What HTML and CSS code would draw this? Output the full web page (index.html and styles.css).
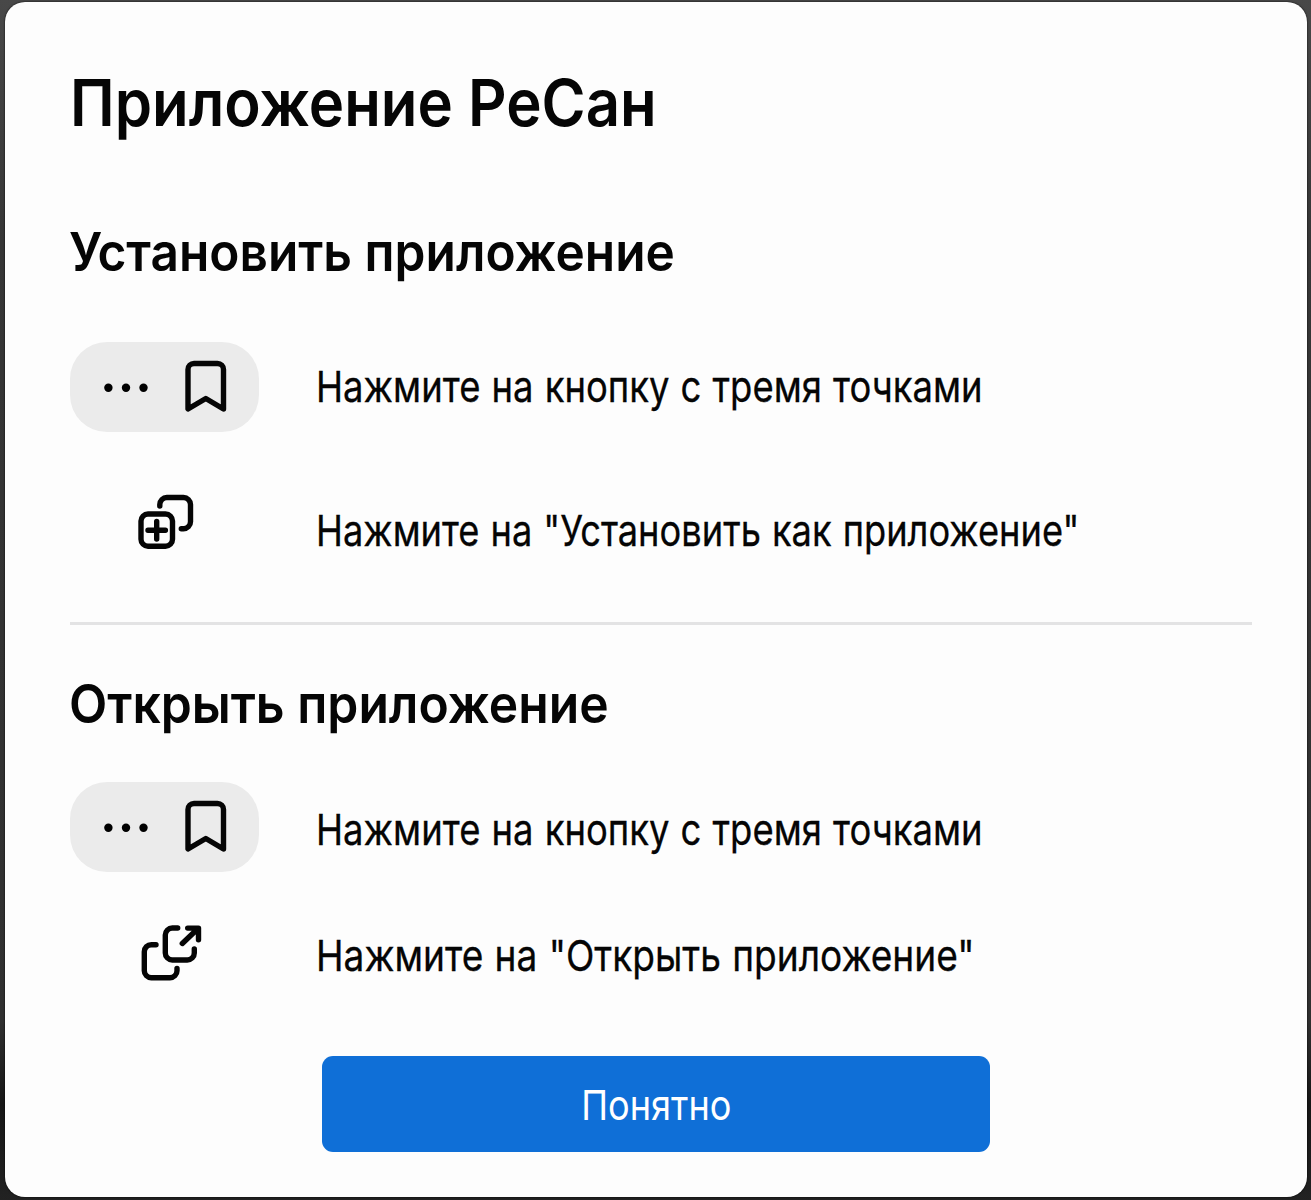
FILE: index.html
```html
<!DOCTYPE html>
<html lang="ru">
<head>
    <meta charset="UTF-8">
    <meta name="viewport" content="width=device-width, initial-scale=1.0">
    <title>Приложение РеСан</title>
    <link rel="stylesheet" href="styles.css">
</head>
<body>
    <div class="modal">
        <h1 class="modal-title">Приложение РеСан</h1>

        <h2 class="section-title install-title">Установить приложение</h2>
        <div class="step step-menu">
            <div class="step-icon">
                <svg class="pill" viewBox="0 0 189 90">
                    <circle cx="38.4" cy="45.8" r="4.2"/>
                    <circle cx="56" cy="45.8" r="4.2"/>
                    <circle cx="73.5" cy="45.8" r="4.2"/>
                    <path class="line" d="M118 67V27.5a6 6 0 0 1 6-6h23.5a6 6 0 0 1 6 6V67l-17.7-10.5z"/>
                </svg>
            </div>
            <p class="step-text text-menu">Нажмите на кнопку с тремя точками</p>
        </div>
        <div class="step step-install">
            <div class="step-icon">
                <svg class="icon" viewBox="0 0 64 58">
                    <rect class="line" x="5" y="20" width="31.5" height="32.2" rx="7"/>
                    <path class="line" d="M20.7 27.5v17.5M12 36.2h17.4"/>
                    <path class="line" d="M23.8 12v-1.5a7 7 0 0 1 7-7h16.7a7 7 0 0 1 7 7v17.2a7 7 0 0 1-7 7h-2.2"/>
                </svg>
            </div>
            <p class="step-text text-install">Нажмите на "Установить как приложение"</p>
        </div>

        <hr class="divider">

        <h2 class="section-title open-title">Открыть приложение</h2>
        <div class="step step-menu-open">
            <div class="step-icon">
                <svg class="pill" viewBox="0 0 189 90">
                    <circle cx="38.4" cy="45.8" r="4.2"/>
                    <circle cx="56" cy="45.8" r="4.2"/>
                    <circle cx="73.5" cy="45.8" r="4.2"/>
                    <path class="line" d="M118 67V27.5a6 6 0 0 1 6-6h23.5a6 6 0 0 1 6 6V67l-17.7-10.5z"/>
                </svg>
            </div>
            <p class="step-text text-menu">Нажмите на кнопку с тремя точками</p>
        </div>
        <div class="step step-open">
            <div class="step-icon">
                <svg class="icon icon-open" viewBox="0 0 64 58">
                    <path class="line" d="M16 19.7h-4.7a7 7 0 0 0-7 7v19a7 7 0 0 0 7 7H30a7 7 0 0 0 7-7v-2.2"/>
                    <path class="line" d="M37.7 3h-5.4a7 7 0 0 0-7 7v18a7 7 0 0 0 7 7h15a7 7 0 0 0 7-7v-4"/>
                    <path class="line" d="M42.3 18.5L58.3 3.3M47.7 3.1h10.8v11.7"/>
                </svg>
            </div>
            <p class="step-text text-open">Нажмите на "Открыть приложение"</p>
        </div>

        <button class="ok-button"><span class="ok-text">Понятно</span></button>
    </div>
</body>
</html>
```
FILE: styles.css
```css
* {
    box-sizing: border-box;
    margin: 0;
    padding: 0;
}
body {
    height: 1200px;
    padding: 2px 4px 2px 5px;
    overflow: hidden;
    font-family: Inter, Roboto, sans-serif;
    color: #050505;
    background: linear-gradient(#484848, #363636 20%, #303030 85%, #161616 92%, #222222);
}
.modal {
    height: 1195px;
    padding: 61px 55px 0 65px;
    border-radius: 20px;
    background: #fdfdfd;
    box-shadow: 0 0 2px #000000;
}
.modal-title,
.section-title,
.step-text {
    transform-origin: left center;
    white-space: nowrap;
}
.modal-title {
    font-size: 65px;
    font-weight: 600;
    line-height: 80px;
    transform: scaleX(0.921);
}
.section-title {
    margin-left: -1px;
    font-size: 53px;
    font-weight: 600;
    line-height: 64px;
}
.install-title {
    margin-top: 77px;
    transform: scaleX(0.936);
}
.open-title {
    margin-top: 47px;
    transform: scaleX(0.939);
}
.step {
    display: flex;
}
.step-icon {
    width: 189px;
    margin-right: 57px;
    flex-shrink: 0;
}
.step-text {
    align-self: center;
    font-size: 43px;
    line-height: 52px;
    word-spacing: 1px;
    -webkit-text-stroke: 0.3px #050505;
}
.text-menu {
    transform: scaleX(0.848);
}
.text-install {
    transform: scaleX(0.843);
}
.text-open {
    transform: scaleX(0.863);
}
.step-menu {
    height: 88px;
    margin-top: 58px;
}
.step-install {
    height: 72px;
    margin-top: 64px;
}
.step-menu-open {
    height: 93px;
    margin-top: 46px;
}
.step-open {
    height: 59px;
    margin-top: 50px;
}
.pill {
    display: block;
    width: 189px;
    height: 90px;
    border-radius: 37px;
    background: #ebebeb;
}
.icon {
    display: block;
    width: 64px;
    height: 58px;
    margin-left: 66px;
}
.icon-open {
    margin-left: 70px;
}
.line {
    fill: none;
    stroke: #050505;
    stroke-width: 5.4;
    stroke-linecap: round;
    stroke-linejoin: round;
}
.divider {
    height: 3px;
    margin-top: 56px;
    border: none;
    background: #e3e3e4;
}
.ok-button {
    display: block;
    width: 668px;
    height: 96px;
    margin: 72px 0 0 252px;
    border: none;
    border-radius: 11px;
    background: #0f6fd7;
    color: #ffffff;
    font-family: inherit;
    font-size: 41px;
}
.ok-text {
    display: inline-block;
    transform: translateY(1px) scaleX(0.88);
}
```
